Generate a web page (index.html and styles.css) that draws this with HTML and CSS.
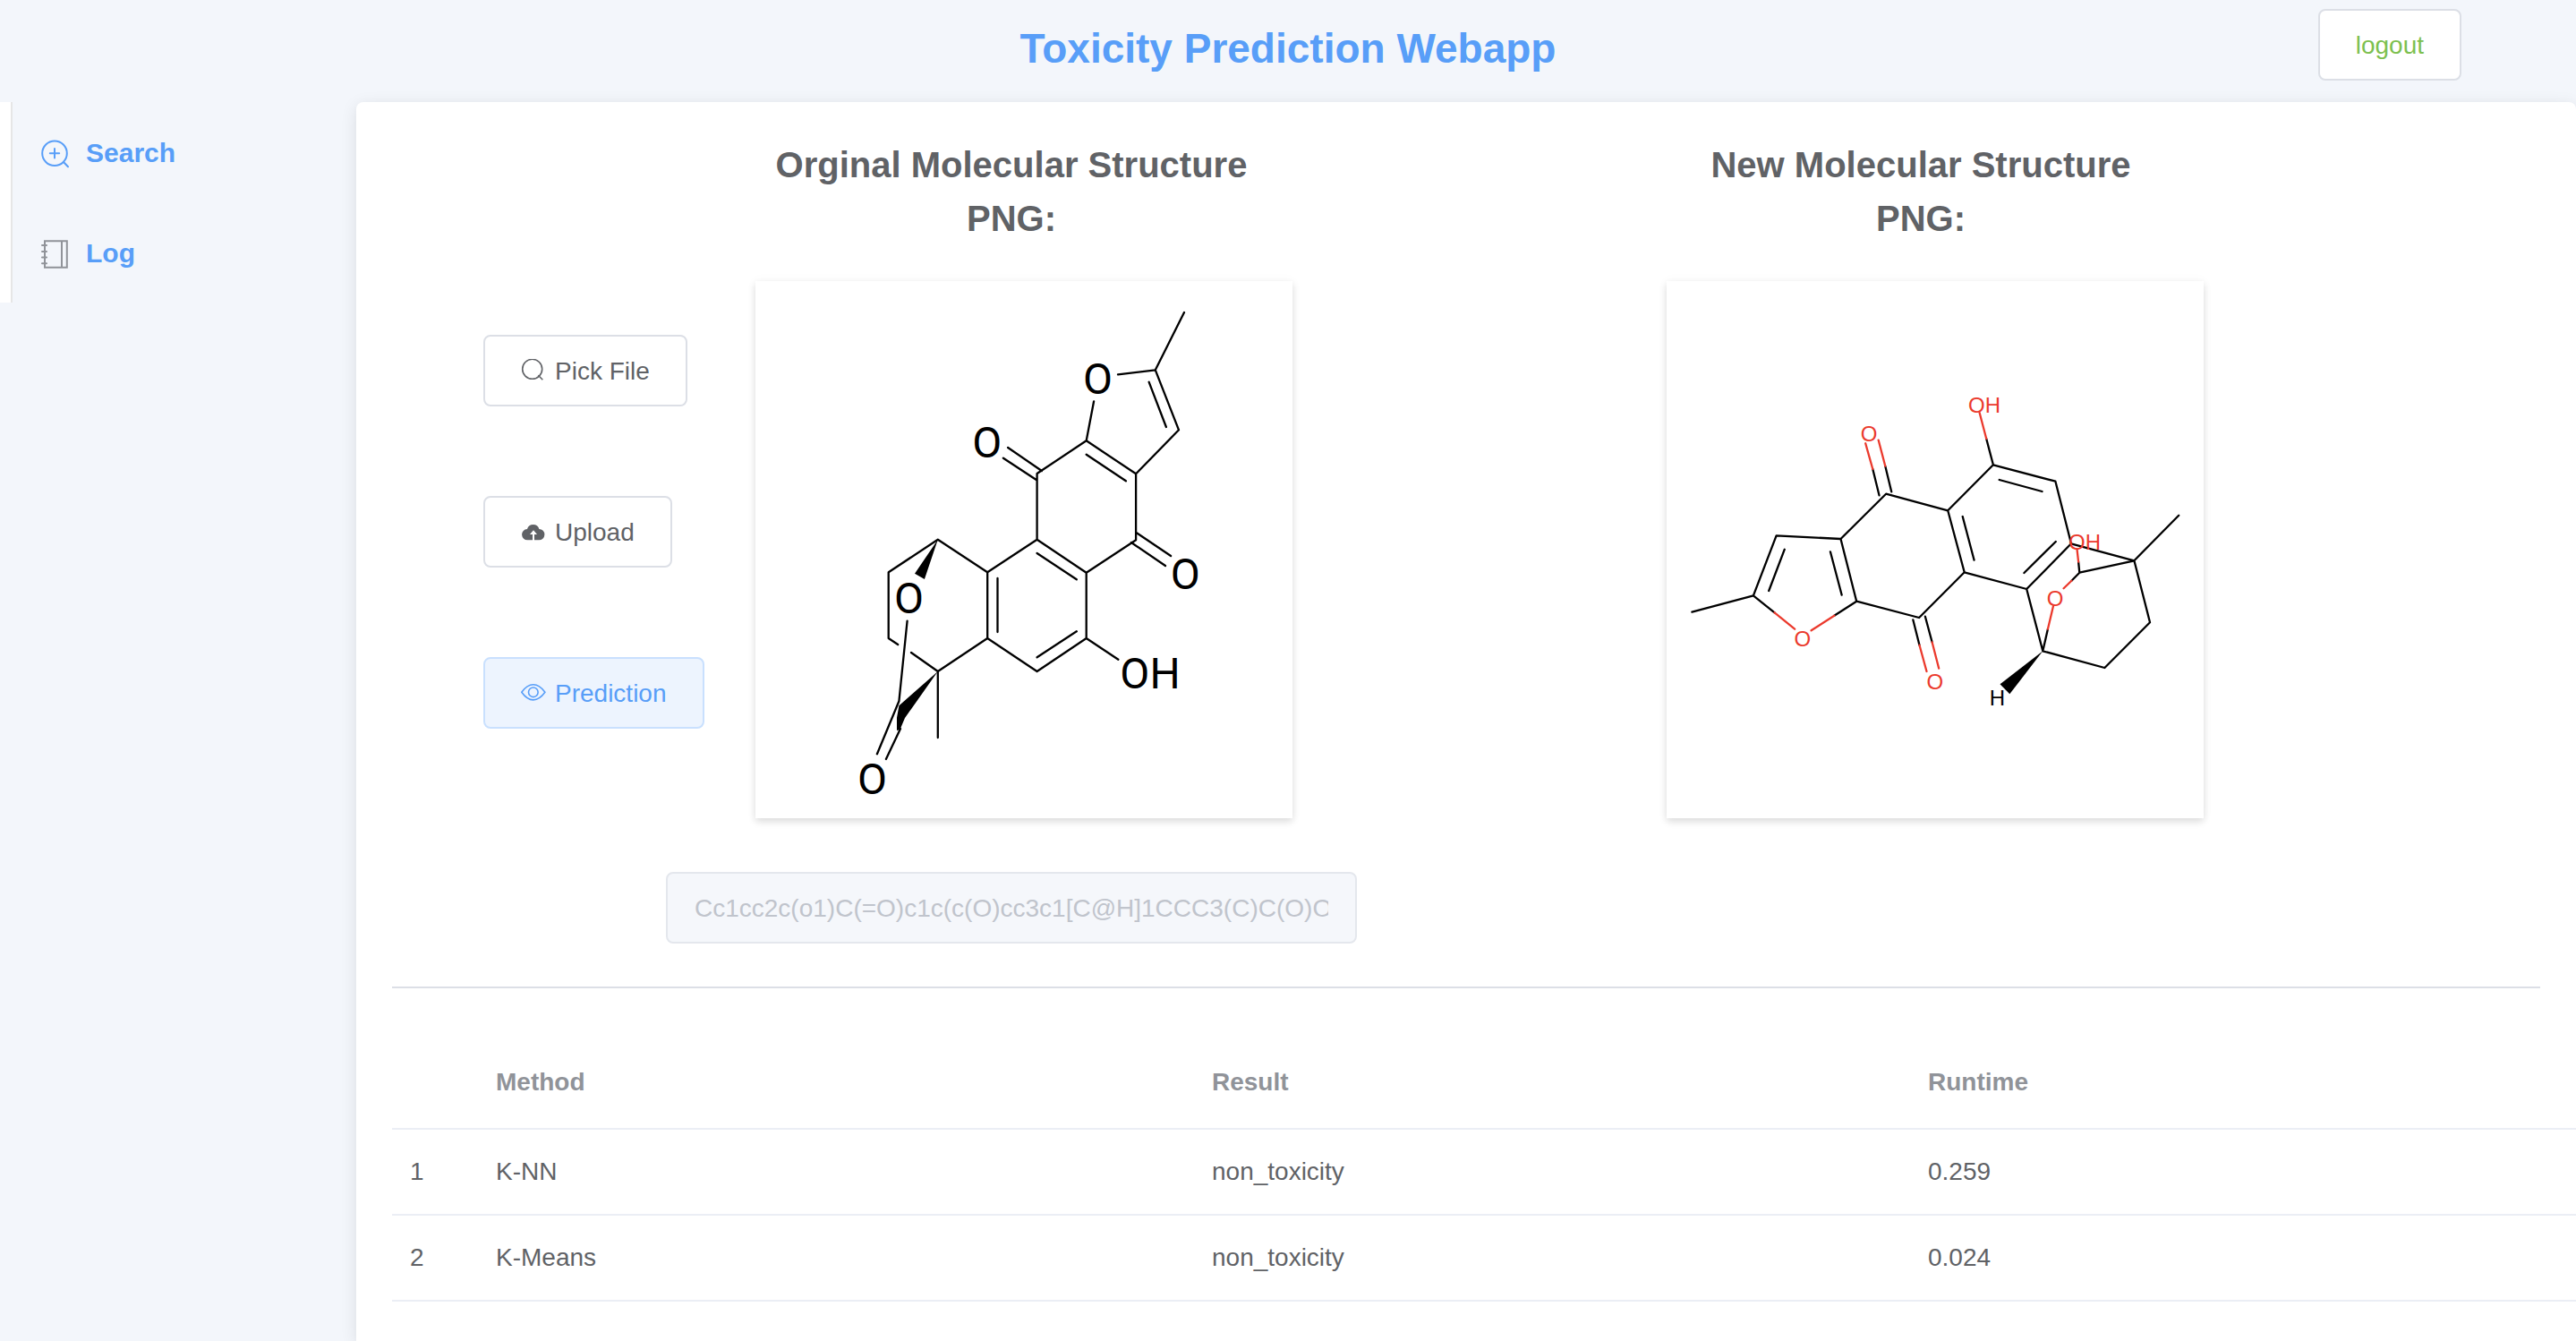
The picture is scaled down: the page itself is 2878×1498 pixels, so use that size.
FILE: index.html
```html
<!DOCTYPE html>
<html lang="en">
<head>
  <meta charset="utf-8">
  <title>Toxicity Prediction Webapp</title>
  <link rel="stylesheet" href="styles.css">
</head>
<body>
  <header class="header">
    <h1 class="title">Toxicity Prediction Webapp</h1>
    <button class="button button-logout" type="button">logout</button>
  </header>
  <div class="layout">
    <nav class="sidebar">
      <ul class="menu">
        <li>
          <a class="menu-item" href="#search">
            <svg class="menu-icon" viewBox="0 0 36 36" aria-hidden="true">
              <circle cx="15" cy="18.3" r="13.8"/>
              <path d="M25 28 30 33.3M9.8 18.3H20.2M15 13.1V23.5"/>
            </svg>
            Search
          </a>
        </li>
        <li>
          <a class="menu-item" href="#log">
            <svg class="menu-icon menu-icon-muted" viewBox="0 0 36 36" aria-hidden="true">
              <path d="M4 4.2H28.8V33.8H4ZM23 4.2V33.8M1 9H6M1 16H6M1 22.6H6M1 29.2H6"/>
            </svg>
            Log
          </a>
        </li>
      </ul>
    </nav>
    <main class="panel" id="search">
      <div class="columns">
        <h2 class="heading heading-original">Orginal Molecular Structure<br>PNG:</h2>
        <h2 class="heading heading-new">New Molecular Structure<br>PNG:</h2>
      </div>

      <div class="workspace">
        <div class="actions">
          <button class="button" type="button">
            <svg class="button-icon" viewBox="0 0 28 28" aria-hidden="true">
              <circle cx="12.7" cy="11.3" r="11"/>
              <path d="M19.3 18.3 24.3 23.3"/>
            </svg>
            Pick File
          </button>
          <button class="button" type="button">
            <svg class="button-icon button-icon-solid" viewBox="0 0 28 28" aria-hidden="true">
              <path d="M13 22.3H7.5A6.2 6.2 0 0 1 7 9.9A7 7 0 0 1 20.4 9.9A6.2 6.2 0 0 1 20 22.3H15V16H18L14 11.3L10 16H13Z"/>
            </svg>
            Upload
          </button>
          <button class="button button-primary" type="button">
            <svg class="button-icon" viewBox="0 0 28 28" aria-hidden="true">
              <path d="M.8 12.3C5 6.4 9 3.8 13.8 3.8S22.6 6.4 26.9 12.3C22.6 18.2 18.6 20.9 13.8 20.9S5 18.2.8 12.3Z"/>
              <circle cx="13.8" cy="12.3" r="5.3"/>
            </svg>
            Prediction
          </button>
        </div>

        <figure class="picture">
          <svg class="molecule" viewBox="0 0 600 600" role="img" aria-label="Original molecule">
            <path class="bond" d="M479 35 446.8 99.3M405 104.3 446.8 99.3 473 166.3 425.1 215.3 369.7 178.3 378.1 134.3M439.6 112.7 458.9 163M369.7 193.7 413.9 223.3
              M369.7 178.3 314.6 215V288.7L369.7 325.7 425.1 289.3V215.3
              M282.1 186 319.9 212M276.9 197.7 313.8 222
              M425.9 281.3 464.1 307M419.9 292 458 318
              M314.6 288.7 259.2 325.3V399L314.6 436 369.7 399V325.7
              M314.6 304 358.8 333.3M270.5 332V392M314.6 420.3 358.8 391.3M369.7 399 405.4 422.7
              M259.2 325.3 203.8 288.7 148.7 325.3V399L159.2 406M174 415 203.8 436 259.2 399M203.8 436V510
              M169.6 379.7 160.4 469.3 135.9 528.3M162 500 145.9 534"/>
            <path class="wedge" d="M203.8 288.7 178 326.7 188.9 333ZM203.8 436 160.4 474.3 158 487.7 158 502 161.5 501 167 488Z"/>
            <g class="atom atom-large">
              <text x="382.5" y="126">O</text>
              <text x="258.8" y="197">O</text>
              <text x="480.2" y="344">O</text>
              <text x="171.6" y="371">O</text>
              <text x="130.6" y="573">O</text>
              <text x="441" y="455">OH</text>
            </g>
          </svg>
        </figure>

        <figure class="picture">
          <svg class="molecule" viewBox="0 0 600 600" role="img" aria-label="New molecule">
            <path class="bond" d="M28.4 369.7 96.9 351.3 122.6 284.3 194.5 288 212.2 357.7 187.3 373.7M96.9 351.3 120.6 370.3
              M131.8 299.7 114.2 346M182.9 302.3 195.7 350.7
              M194.5 288 245.1 237.7 314.2 256.3 332.7 325.3 282.1 376 212.2 357.7
              M237.5 239.3 230.3 210M251.2 235.3 244.3 206.7M275.3 378.3 282.5 406.7M288.9 374.7 296.6 403.3
              M330.7 263 343.6 311.7M371.7 222 419.5 235M434.8 291 399.4 326
              M314.2 256.3 364.9 205.3 434.4 223.7 452 293.3 402.2 344 332.7 325.3M364.9 205.3 357.2 176
              M452 293.3 522.4 312.3 572.2 261.7M522.4 312.3 461.3 325.7 460.1 313.7M461.3 325.7 452.4 334.7
              M402.2 344 420.3 413.3 425.9 388.7M420.3 413.3 489.4 432 540 381.3 522.4 312.3"/>
            <path class="bond bond-oxygen" d="M120.6 370.3 143.1 388.7M187.3 373.7 161.6 390.3M230.3 210 222.2 181.3M244.3 206.7 236.7 177.7
              M282.5 406.7 290.5 436M296.6 403.3 304.2 432.7M357.2 176 349.6 147M460.1 313.7 458.5 299.3M452.4 334.7 443.6 343.3M432 363 425.9 388.7"/>
            <path class="wedge" d="M420.3 413.3 372.5 450.3 383.3 461.3Z"/>
            <g class="atom atom-oxygen">
              <text x="151.9" y="408">O</text>
              <text x="226.2" y="179">O</text>
              <text x="299.8" y="456">O</text>
              <text x="434" y="363">O</text>
              <text x="355" y="147">OH</text>
              <text x="467" y="300">OH</text>
            </g>
            <text class="atom" x="369.3" y="474">H</text>
          </svg>
        </figure>
      </div>

      <form class="columns">
        <input class="smiles" type="text" aria-label="SMILES" disabled value="Cc1cc2c(o1)C(=O)c1c(c(O)cc3c1[C@H]1CCC3(C)C(O)O1)C2=O">
      </form>

      <hr class="divider">

      <table class="results">
        <thead>
          <tr><th class="index"></th><th scope="col">Method</th><th scope="col">Result</th><th scope="col">Runtime</th></tr>
        </thead>
        <tbody>
          <tr><td>1</td><td>K-NN</td><td>non_toxicity</td><td>0.259</td></tr>
          <tr><td>2</td><td>K-Means</td><td>non_toxicity</td><td>0.024</td></tr>
        </tbody>
      </table>
    </main>
  </div>
</body>
</html>
```
FILE: styles.css
```css
* {
  box-sizing: border-box;
}

body {
  margin: 0;
  background: #f3f6fb;
  color: #606266;
  font-family: "Liberation Sans", Arial, sans-serif;
  font-size: 28px;
}

.header {
  display: grid;
  grid-template-columns: 1fr auto 1fr;
  align-items: start;
  height: 114px;
}

.title {
  grid-column: 2;
  margin: 0;
  color: #589ef8;
  font-size: 46px;
  line-height: 108px;
}

.layout {
  display: grid;
  grid-template-columns: 398px minmax(0, 1fr);
  min-height: calc(100vh - 114px);
}

/* Sidebar */

.sidebar {
  align-self: start;
  border-left: 12px solid #fff;
}

.menu {
  margin: 0;
  padding: 0;
  border-left: 2px solid #e6e6e6;
  list-style: none;
}

.menu-item {
  display: flex;
  align-items: center;
  gap: 14px;
  height: 112px;
  padding: 2px 0 0 32px;
  color: #589ef8;
  font-size: 30px;
  font-weight: bold;
  text-decoration: none;
}

.menu-icon {
  width: 36px;
  height: 36px;
  fill: none;
  stroke: currentColor;
  stroke-width: 2;
  stroke-linecap: round;
}

.menu-icon-muted {
  color: #909399;
}

/* Main panel */

.panel {
  padding: 40px;
  overflow: hidden;
  border-radius: 8px 8px 0 0;
  background: #fff;
  box-shadow: 0 4px 18px rgba(0, 0, 0, 0.1);
}

.columns {
  display: grid;
  grid-template-columns: 306fr 772fr 244fr 772fr 306fr;
}

.heading {
  margin: 0;
  font-size: 40px;
  line-height: 60px;
  text-align: center;
}

.heading-original {
  grid-column: 2;
}

.heading-new {
  grid-column: 4;
}

.workspace {
  display: grid;
  grid-template-columns: 406fr 1018fr 976fr;
  margin: 40px 0 60px;
}

.actions {
  display: flex;
  flex-direction: column;
  align-items: flex-start;
  gap: 100px;
  padding: 60px 0 0 102px;
}

.button {
  display: flex;
  align-items: center;
  gap: 10px;
  height: 80px;
  padding: 2px 40px 0;
  border: 2px solid #dcdfe6;
  border-radius: 8px;
  background: #fff;
  color: #606266;
  font: inherit;
  white-space: nowrap;
}

.button-primary {
  border-color: #c9e0fe;
  background: #edf4fe;
  color: #589ef8;
}

.button-logout {
  justify-self: end;
  margin: 10px 128px 0 0;
  color: #7dc04f;
}

.button-icon {
  width: 28px;
  height: 28px;
  fill: none;
  stroke: currentColor;
  stroke-width: 1.6;
}

.button-icon-solid {
  fill: currentColor;
  stroke: none;
}

.picture {
  width: 600px;
  margin: 0;
  background: #fff;
  box-shadow: 0 4px 8px rgba(0, 0, 0, 0.12), 0 0 12px rgba(0, 0, 0, 0.04);
}

.molecule {
  display: block;
  width: 100%;
}

.bond {
  fill: none;
  stroke: #000;
  stroke-width: 2.3;
  stroke-linecap: round;
  stroke-linejoin: round;
}

.bond-oxygen {
  stroke: #eb3a2d;
}

.wedge {
  fill: #000;
}

.atom {
  fill: #000;
  font-size: 24px;
  text-anchor: middle;
}

.atom-large {
  font-family: Roboto, sans-serif;
  font-size: 48px;
}

.atom-oxygen {
  fill: #eb3a2d;
}

.smiles {
  grid-column: 2;
  width: 100%;
  height: 80px;
  padding: 2px 30px 0;
  border: 2px solid #e4e7ed;
  border-radius: 8px;
  background: #f5f7fb;
  color: #c0c4cc;
  font: inherit;
}

.divider {
  height: 2px;
  margin: 48px 0 54px;
  border: 0;
  background: #dcdfe6;
}

/* Results */

.results {
  width: calc(100% + 96px);
  border-collapse: separate;
  border-spacing: 0;
  table-layout: fixed;
  line-height: 46px;
  text-align: left;
}

.results th,
.results td {
  padding: 24px 20px;
  border-bottom: 2px solid #ebeef5;
}

.results th {
  padding: 28px 20px;
  color: #909399;
}

.results .index {
  width: 96px;
}
```
